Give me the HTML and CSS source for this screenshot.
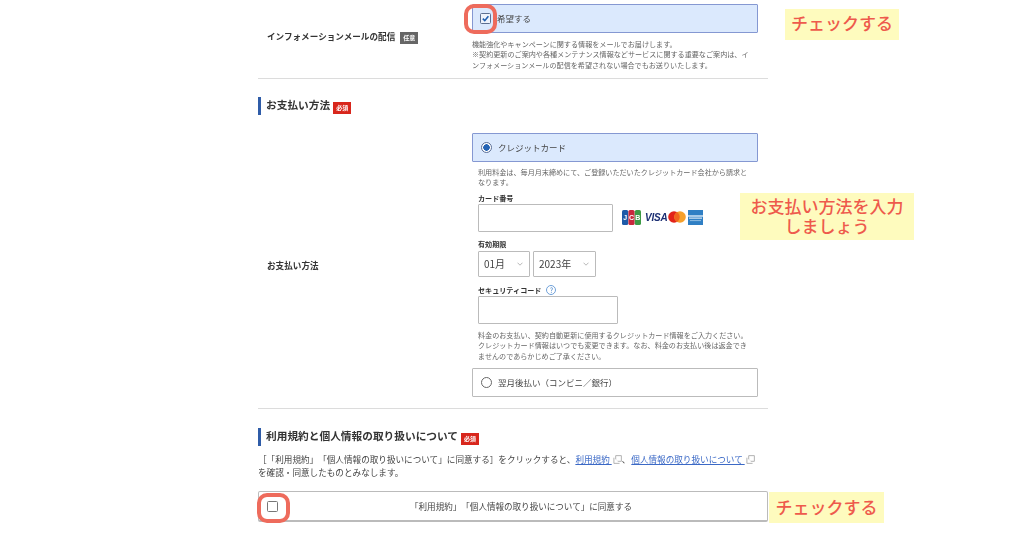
FILE: index.html
```html
<!DOCTYPE html>
<html lang="ja">
<head>
<meta charset="utf-8">
<title>お支払い方法</title>
<link rel="stylesheet" href="styles.css">
</head>
<body>
<main class="page">
  <section class="row row-mail">
    <div class="row-label row-label-mail">インフォメーションメールの配信<span class="badge badge-optional">任意</span></div>
    <div class="row-field">
      <div class="choice choice-on choice-short">
        <span class="checkbox checkbox-on"><svg viewBox="0 0 10 10" class="tick"><path d="M2 5.2 4.2 7.4 8.2 2.4" /></svg></span>
        <span class="choice-label">希望する</span>
      </div>
      <p class="note note-mail">機能強化やキャンペーンに関する情報をメールでお届けします。<br>※契約更新のご案内や各種メンテナンス情報などサービスに関する重要なご案内は、イ<br>ンフォメーションメールの配信を希望されない場合でもお送りいたします。</p>
    </div>
  </section>

  <h2 class="heading heading-pay">お支払い方法<span class="badge badge-required">必須</span></h2>

  <section class="row row-pay">
    <div class="row-label row-label-pay">お支払い方法</div>
    <div class="row-field">
      <div class="choice choice-on">
        <span class="radio radio-on"></span>
        <span class="choice-label">クレジットカード</span>
      </div>
      <div class="card-form">
        <p class="note">利用料金は、毎月月末締めにて、ご登録いただいたクレジットカード会社から請求と<br>なります。</p>
        <div class="field-title field-card">カード番号</div>
        <div class="card-line">
          <div class="input input-card"></div>
          <div class="brands">
            <svg class="brand-jcb" viewBox="0 0 19 15">
              <rect x="0" y="0" width="6.2" height="15" rx="1.6" fill="#1d5aa8"/>
              <rect x="6.4" y="0" width="6.2" height="15" rx="1.6" fill="#c8273c"/>
              <rect x="12.8" y="0" width="6.2" height="15" rx="1.6" fill="#3c9a45"/>
              <text x="3.1" y="10" class="jcb-letter">J</text>
              <text x="9.5" y="10" class="jcb-letter">C</text>
              <text x="15.9" y="10" class="jcb-letter">B</text>
            </svg>
            <span class="brand-visa">VISA</span>
            <svg class="brand-mc" viewBox="0 0 18 12">
              <circle cx="6" cy="6" r="5.8" fill="#e2231a"/>
              <circle cx="12" cy="6" r="5.8" fill="#f5a02c"/>
              <path d="M9 1.1a5.8 5.8 0 0 1 0 9.8a5.8 5.8 0 0 1 0-9.8z" fill="#f0641e"/>
            </svg>
            <svg class="brand-amex" viewBox="0 0 15 15">
              <rect width="15" height="15" fill="#2f7fc4"/>
              <path d="M0 6h15M1 8.2h13" stroke="#cfe3f4" stroke-width="1.3"/>
              <path d="M2 10.6h11" stroke="#8fbde3" stroke-width="1"/>
            </svg>
          </div>
        </div>
        <div class="field-title field-exp">有効期限</div>
        <div class="select-line">
          <div class="select select-month"><span>01月</span><svg class="chev" viewBox="0 0 6 4"><path d="M.5.7 3 3.2 5.5.7"/></svg></div>
          <div class="select select-year"><span>2023年</span><svg class="chev" viewBox="0 0 6 4"><path d="M.5.7 3 3.2 5.5.7"/></svg></div>
        </div>
        <div class="field-title field-sec">セキュリティコード<span class="help">?</span></div>
        <div class="input input-sec"></div>
        <p class="note note-sec">料金のお支払い、契約自動更新に使用するクレジットカード情報をご入力ください。<br>クレジットカード情報はいつでも変更できます。なお、料金のお支払い後は返金でき<br>ませんのであらかじめご了承ください。</p>
      </div>
      <div class="choice choice-off">
        <span class="radio"></span>
        <span class="choice-label">翌月後払い（コンビニ／銀行）</span>
      </div>
    </div>
  </section>

  <h2 class="heading heading-terms">利用規約と個人情報の取り扱いについて<span class="badge badge-required">必須</span></h2>

  <p class="terms">［「利用規約」「個人情報の取り扱いについて」に同意する］をクリックすると、<a href="#">利用規約 </a><svg class="ext" viewBox="0 0 10 10"><path d="M3 .7h6.3v6.3H3z"/><path d="M1 3v6.3h6.3"/></svg>、<a class="link-second" href="#">個人情報の取り扱いについて </a><svg class="ext" viewBox="0 0 10 10"><path d="M3 .7h6.3v6.3H3z"/><path d="M1 3v6.3h6.3"/></svg><br>を確認・同意したものとみなします。</p>

  <div class="agree">
    <span class="checkbox checkbox-agree"></span>
    <span>「利用規約」「個人情報の取り扱いについて」に同意する</span>
  </div>

  <div class="ring ring-top"></div>
  <div class="ring ring-bottom"></div>
  <div class="callout callout-top">チェックする</div>
  <div class="callout callout-pay">お支払い方法を入力<br>しましょう</div>
  <div class="callout callout-bottom">チェックする</div>
</main>
</body>
</html>
```
FILE: styles.css
```css
* { box-sizing: border-box; }
html, body { margin: 0; padding: 0; background: #fff; }
body {
  height: 550px;
  overflow: hidden;
  font-family: "Noto Sans CJK JP", "Liberation Sans", sans-serif;
  font-feature-settings: "chws" 0;
  text-spacing-trim: space-all;
  color: #333;
}
.page {
  position: relative;
  width: 1024px;
  height: 550px;
  padding-left: 258px;
  padding-right: 256px;
  filter: blur(0.45px);
}
p { margin: 0; }

.row { display: flex; }
.row-mail {
  height: 79px;
  padding-top: 4px;
  border-bottom: 1px solid #dcdcdc;
}
.row-pay {
  margin-top: 18px;
  height: 276px;
  padding-bottom: 10px;
  border-bottom: 1px solid #dcdcdc;
}
.row-label {
  width: 214px;
  padding-left: 9px;
  align-self: center;
  font-size: 8.6px;
  line-height: 12px;
  font-weight: 700;
  color: #333;
  white-space: nowrap;
}
.row-label-mail { padding-bottom: 8px; }
.row-label-pay { padding-bottom: 2px; }
.row-field { width: 286px; }

.badge {
  display: inline-block;
  width: 18px;
  height: 12px;
  color: #fff;
  font-size: 6px;
  font-weight: 700;
  line-height: 12px;
  text-align: center;
}
.badge-optional {
  margin-left: 5px;
  background: #666;
  vertical-align: middle;
}
.badge-required {
  margin: 5px 0 0 3px;
  background: #d8261c;
}

.choice {
  display: flex;
  align-items: center;
  height: 29px;
  font-size: 8.5px;
  color: #444;
  border-radius: 1px;
}
.choice-label { margin-top: -2px; }
.choice-on {
  background: #dbe9fd;
  border: 1px solid #8598d2;
  padding-left: 8px;
  gap: 6px;
}
.choice-short { padding-left: 7px; gap: 6px; }
.choice-off {
  border: 1px solid #bbb;
  padding-left: 8px;
  gap: 6px;
  margin-top: 7px;
}

.checkbox {
  display: flex;
  align-items: center;
  justify-content: center;
  width: 11px;
  height: 11px;
  border: 1px solid #777;
  border-radius: 1.5px;
  background: #fff;
}
.checkbox-on { background: #eef3fb; border-color: #5d6f90; }
.tick { width: 9px; height: 9px; fill: none; stroke: #1f5fb0; stroke-width: 1.8; }

.radio {
  width: 11px;
  height: 11px;
  flex: none;
  border: 1px solid #666;
  border-radius: 50%;
  background: #fff;
}
.radio-on {
  border-color: #5b6f96;
  background: radial-gradient(circle, #2463b4 0 3px, #fff 3.5px);
}

.note {
  font-size: 7.1px;
  line-height: 10.4px;
  color: #666;
  white-space: nowrap;
}
.note-mail { margin-top: 6px; }

.heading {
  margin: 0;
  height: 18px;
  padding-left: 5px;
  border-left: 3px solid #2f5ca8;
  font-size: 10.7px;
  line-height: 15px;
  font-weight: 700;
  color: #333;
  white-space: nowrap;
  display: flex;
  align-items: flex-start;
}
.heading-pay { margin-top: 18px; }
.heading-terms { margin-top: 19px; }

.card-form { padding-left: 6px; padding-top: 5px; }
.field-title {
  height: 10px;
  font-size: 7.1px;
  line-height: 10px;
  font-weight: 700;
  color: #333;
  display: flex;
  align-items: center;
}
.field-card { margin-top: 5px; }
.field-exp { margin-top: 7px; }
.field-sec { margin-top: 8px; }
.input {
  border: 1px solid #bbb;
  border-radius: 1px;
  background: #fff;
  height: 28px;
}
.input-card { width: 135px; }
.input-sec { width: 140px; margin-top: 1px; }
.card-line { display: flex; align-items: flex-start; margin-top: 1px; }
.brands { display: flex; align-items: center; height: 15px; margin: 6px 0 0 9px; }
.brand-jcb { width: 19px; height: 15px; }
.jcb-letter { font-size: 7px; font-weight: 700; fill: #fff; text-anchor: middle; font-family: "Liberation Sans", sans-serif; }
.brand-visa {
  margin-left: 4px;
  width: 23px;
  font-family: "Liberation Sans", sans-serif;
  font-size: 10px;
  font-weight: 700;
  font-style: italic;
  color: #1c2f73;
  letter-spacing: -0.2px;
  line-height: 15px;
}
.brand-mc { width: 18px; height: 12px; }
.brand-amex { width: 15px; height: 15px; margin-left: 2px; }

.select-line { display: flex; gap: 3px; margin-top: 2px; }
.select {
  display: flex;
  align-items: center;
  justify-content: space-between;
  height: 26px;
  padding: 0 6px 0 5px;
  border: 1px solid #bbb;
  border-radius: 1px;
  font-size: 10px;
  color: #444;
}
.select-month { width: 52px; }
.select-year { width: 63px; }
.chev { width: 6px; height: 4px; fill: none; stroke: #999; stroke-width: .7; }
.help {
  display: inline-block;
  width: 10px;
  height: 10px;
  margin-left: 5px;
  border: 1px solid #6fa0d8;
  border-radius: 50%;
  color: #3f7fc6;
  font-size: 7px;
  line-height: 8px;
  text-align: center;
  font-weight: 400;
}
.note-sec { margin-top: 6px; }

.terms {
  margin-top: 7px;
  font-size: 8.6px;
  line-height: 13px;
  color: #444;
  white-space: nowrap;
}
.terms a { color: #3b69c6; }
.link-second { margin-left: 1px; }
.ext {
  display: inline-block;
  width: 9px;
  height: 9px;
  margin-left: 1px;
  fill: #fff;
  stroke: #aaa;
  stroke-width: 1;
  vertical-align: -0.5px;
}

.agree {
  display: flex;
  align-items: center;
  justify-content: center;
  position: relative;
  height: 31px;
  margin-top: 12px;
  padding-left: 16px;
  border: 1px solid #bbb;
  border-bottom-width: 2px;
  border-radius: 2px;
  font-size: 8.55px;
  color: #444;
}
.checkbox-agree { position: absolute; left: 8px; top: 9px; }

.ring {
  position: absolute;
  width: 33px;
  height: 30px;
  border: 4px solid #ee6b5c;
  border-radius: 10px;
}
.ring-top { left: 464px; top: 4px; }
.ring-bottom { left: 257px; top: 493px; }

.callout {
  position: absolute;
  background: #fefbbe;
  color: #ee5a4c;
  font-size: 17px;
  font-weight: 500;
  line-height: 20px;
  text-align: center;
  white-space: nowrap;
}
.callout-top { left: 785px; top: 9px; width: 114px; height: 31px; padding-top: 4px; }
.callout-pay { left: 740px; top: 193px; width: 174px; height: 47px; padding-top: 3px; }
.callout-bottom { left: 769px; top: 492px; width: 115px; height: 31px; padding-top: 5px; }
```
